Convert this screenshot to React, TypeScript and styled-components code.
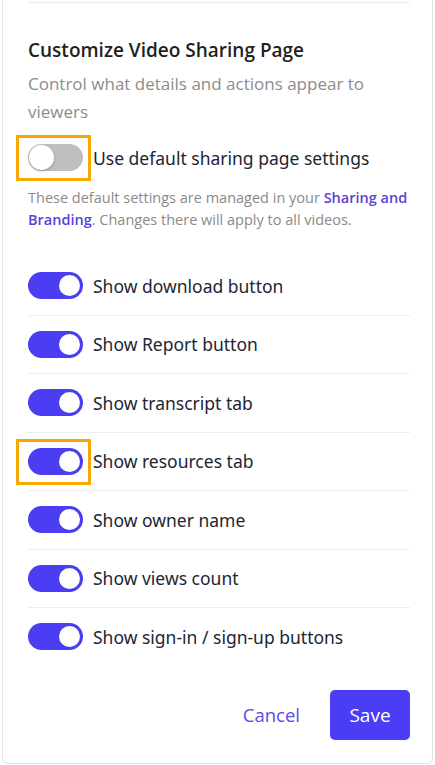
import React from "react";
import styled, { createGlobalStyle } from "styled-components";

const GlobalStyle = createGlobalStyle`
  html, body {
    margin: 0;
    padding: 0;
    background: #ffffff;
  }
  body {
    font-family: "Noto Sans", "Open Sans", sans-serif;
  }
`;

const Page = styled.div`
  padding: 0 2px 2px 2px;
  width: 435px;
  box-sizing: border-box;
`;

const Card = styled.div`
  border: 1px solid #e4e4e4;
  border-top: none;
  border-radius: 0 0 6px 6px;
  padding: 2px 22px 23px 25px;
  background: #fff;
`;

const TopDivider = styled.div`
  height: 1px;
  background: #ececec;
  margin-bottom: 34px;
`;

const Title = styled.h2`
  margin: 0;
  font-family: "Open Sans", "Noto Sans", sans-serif;
  font-weight: 600;
  font-size: 19px;
  line-height: 26px;
  color: #1f1f1f;
`;

const Subtitle = styled.p`
  margin: 7px 0 0;
  font-family: "Open Sans", "Noto Sans", sans-serif;
  font-size: 17px;
  line-height: 28px;
  color: #8c8c8c;
`;

const DefaultRow = styled.div`
  display: flex;
  align-items: center;
  gap: 10px;
  margin-top: 18px;
`;

const Description = styled.p`
  margin: 16px 0 0;
  font-family: "Open Sans", "Noto Sans", sans-serif;
  font-size: 14.5px;
  line-height: 22px;
  color: #8a8a8a;
`;

const Link = styled.a`
  color: #5b3fd6;
  font-weight: 600;
  text-decoration: none;
`;

const List = styled.div`
  margin-top: 26px;
`;

const Row = styled.div`
  display: flex;
  align-items: center;
  gap: 10px;
  padding: 15.25px 0;
  border-bottom: 1px solid #ededed;

  &:last-child {
    border-bottom: none;
  }
`;

const Label = styled.span`
  font-family: "Noto Sans", sans-serif;
  font-size: 17.5px;
  line-height: 24px;
  color: #1e2533;
`;

const ToggleWrap = styled.div<{ $highlight?: boolean }>`
  position: relative;
  display: flex;

  ${(p) =>
    p.$highlight &&
    `
    &::after {
      content: "";
      position: absolute;
      left: -12px;
      right: -8px;
      top: -9px;
      bottom: -10px;
      border: 3px solid #f6a800;
      pointer-events: none;
    }
  `}
`;

const Track = styled.button<{ $on: boolean }>`
  position: relative;
  width: 55px;
  height: 27px;
  border: none;
  padding: 0;
  border-radius: 14px;
  background: ${(p) => (p.$on ? "#4a3df2" : "#bfbfbf")};
  cursor: pointer;
`;

const Knob = styled.span<{ $on: boolean }>`
  position: absolute;
  top: 1px;
  left: ${(p) => (p.$on ? "29px" : "1px")};
  width: ${(p) => (p.$on ? "21px" : "25px")};
  height: ${(p) => (p.$on ? "21px" : "25px")};
  border-radius: 50%;
  background: #fff;
  border: ${(p) => (p.$on ? "2px solid #4a3df2" : "none")};
  box-shadow: ${(p) => (p.$on ? "none" : "0 1px 3px rgba(0,0,0,0.25)")};
`;

const Footer = styled.div`
  display: flex;
  justify-content: flex-end;
  align-items: center;
  gap: 14px;
  margin-top: 24px;
`;

const CancelButton = styled.button`
  background: none;
  border: none;
  padding: 0 16px;
  height: 50px;
  font-family: "Open Sans", "Noto Sans", sans-serif;
  font-size: 18.5px;
  color: #5a4ce6;
  cursor: pointer;
`;

const SaveButton = styled.button`
  width: 80px;
  height: 50px;
  border: none;
  border-radius: 5px;
  background: #4a3df5;
  color: #fff;
  font-family: "Open Sans", "Noto Sans", sans-serif;
  font-size: 19px;
  cursor: pointer;
`;

const Toggle: React.FC<{ on: boolean; highlight?: boolean }> = ({ on, highlight }) => (
  <ToggleWrap $highlight={highlight}>
    <Track $on={on}>
      <Knob $on={on} />
    </Track>
  </ToggleWrap>
);

const options = [
  { label: "Show download button", on: true },
  { label: "Show Report button", on: true },
  { label: "Show transcript tab", on: true },
  { label: "Show resources tab", on: true, highlight: true },
  { label: "Show owner name", on: true },
  { label: "Show views count", on: true },
  { label: "Show sign-in / sign-up buttons", on: true },
];

export default function App() {
  return (
    <Page>
      <GlobalStyle />
      <Card>
        <TopDivider />
        <Title>Customize Video Sharing Page</Title>
        <Subtitle>Control what details and actions appear to viewers</Subtitle>
        <DefaultRow>
          <Toggle on={false} highlight />
          <Label>Use default sharing page settings</Label>
        </DefaultRow>
        <Description>
          These default settings are managed in your <Link>Sharing and Branding</Link>. Changes
          there will apply to all videos.
        </Description>
        <List>
          {options.map((o) => (
            <Row key={o.label}>
              <Toggle on={o.on} highlight={o.highlight} />
              <Label>{o.label}</Label>
            </Row>
          ))}
        </List>
        <Footer>
          <CancelButton>Cancel</CancelButton>
          <SaveButton>Save</SaveButton>
        </Footer>
      </Card>
    </Page>
  );
}
